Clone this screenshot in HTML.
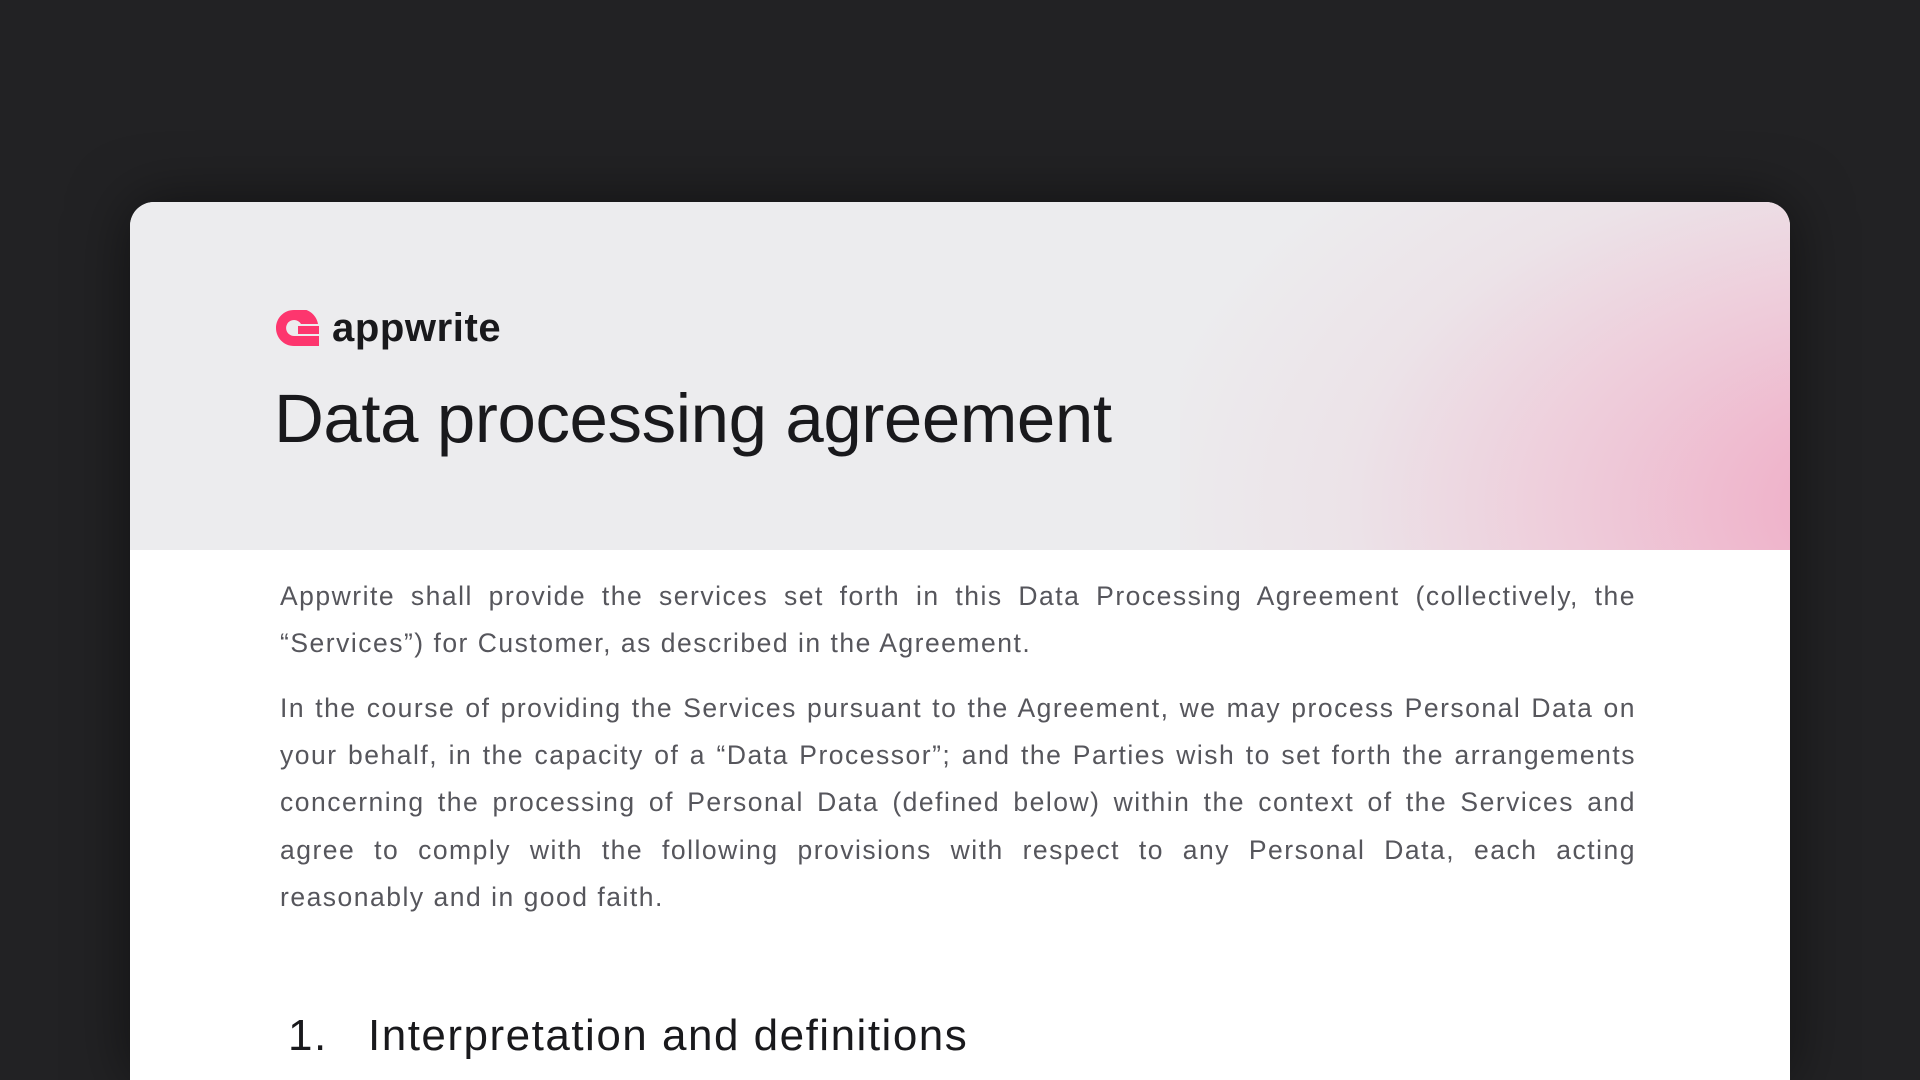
<!DOCTYPE html>
<html><head><meta charset="utf-8"><style>
html,body{margin:0;padding:0;width:1920px;height:1080px;overflow:hidden;background:#222224;font-family:"Liberation Sans",sans-serif}
.card{position:absolute;left:130px;top:202px;width:1660px;height:878px;background:#fff;border-radius:24px 24px 0 0;overflow:hidden;box-shadow:0 0 60px rgba(0,0,0,.5)}
.head{position:absolute;left:0;top:0;width:1660px;height:348px;background:#ececee;overflow:hidden}
.glow{position:absolute;left:1050px;top:-150px;width:1000px;height:700px;background:radial-gradient(ellipse at 75% 65%,rgba(240,160,190,.95) 0%,rgba(240,175,200,.6) 30%,rgba(236,200,215,.25) 55%,rgba(236,236,238,0) 75%)}
.logo{position:absolute;left:146px;top:106px;display:flex;align-items:center}
.logo span{font-size:40px;font-weight:bold;color:#19191c;margin-left:13px;letter-spacing:0.6px;line-height:1}
h1{position:absolute;left:144px;top:176px;margin:0;font-size:69px;font-weight:normal;color:#19191c;letter-spacing:-0.4px;line-height:1.2}
.body{position:absolute;left:150px;top:371px;width:1356px;font-size:26.5px;line-height:47.4px;color:#56565c;text-align:justify;letter-spacing:1.5px}
.body p{margin:0 0 16.7px}
h2{position:absolute;left:158px;top:808px;margin:0;font-size:44px;font-weight:normal;color:#19191c;line-height:52px;letter-spacing:1.5px}
h2 b{font-weight:normal;display:inline-block;width:80px}
</style></head><body>
<div class="card">
 <div class="head"><div class="glow"></div>
  <div class="logo"><svg width="43" height="36" viewBox="0 0 43 36"><path d="M18 0C8 0 0 8 0 18s8 18 18 18h25V26H18a8 8 0 1 1 7-12h17A18 18 0 0 0 18 0z" fill="#fd366e"/><rect x="22" y="16" width="21" height="8" fill="#fd366e"/></svg><span>appwrite</span></div>
  <h1>Data processing agreement</h1>
 </div>
 <div class="body">
  <p>Appwrite shall provide the services set forth in this Data Processing Agreement (collectively, the “Services”) for Customer, as described in the Agreement.</p>
  <p>In the course of providing the Services pursuant to the Agreement, we may process Personal Data on your behalf, in the capacity of a “Data Processor”; and the Parties wish to set forth the arrangements concerning the processing of Personal Data (defined below) within the context of the Services and agree to comply with the following provisions with respect to any Personal Data, each acting reasonably and in good faith.</p>
 </div>
 <h2><b>1.</b>Interpretation and definitions</h2>
</div>
</body></html>
